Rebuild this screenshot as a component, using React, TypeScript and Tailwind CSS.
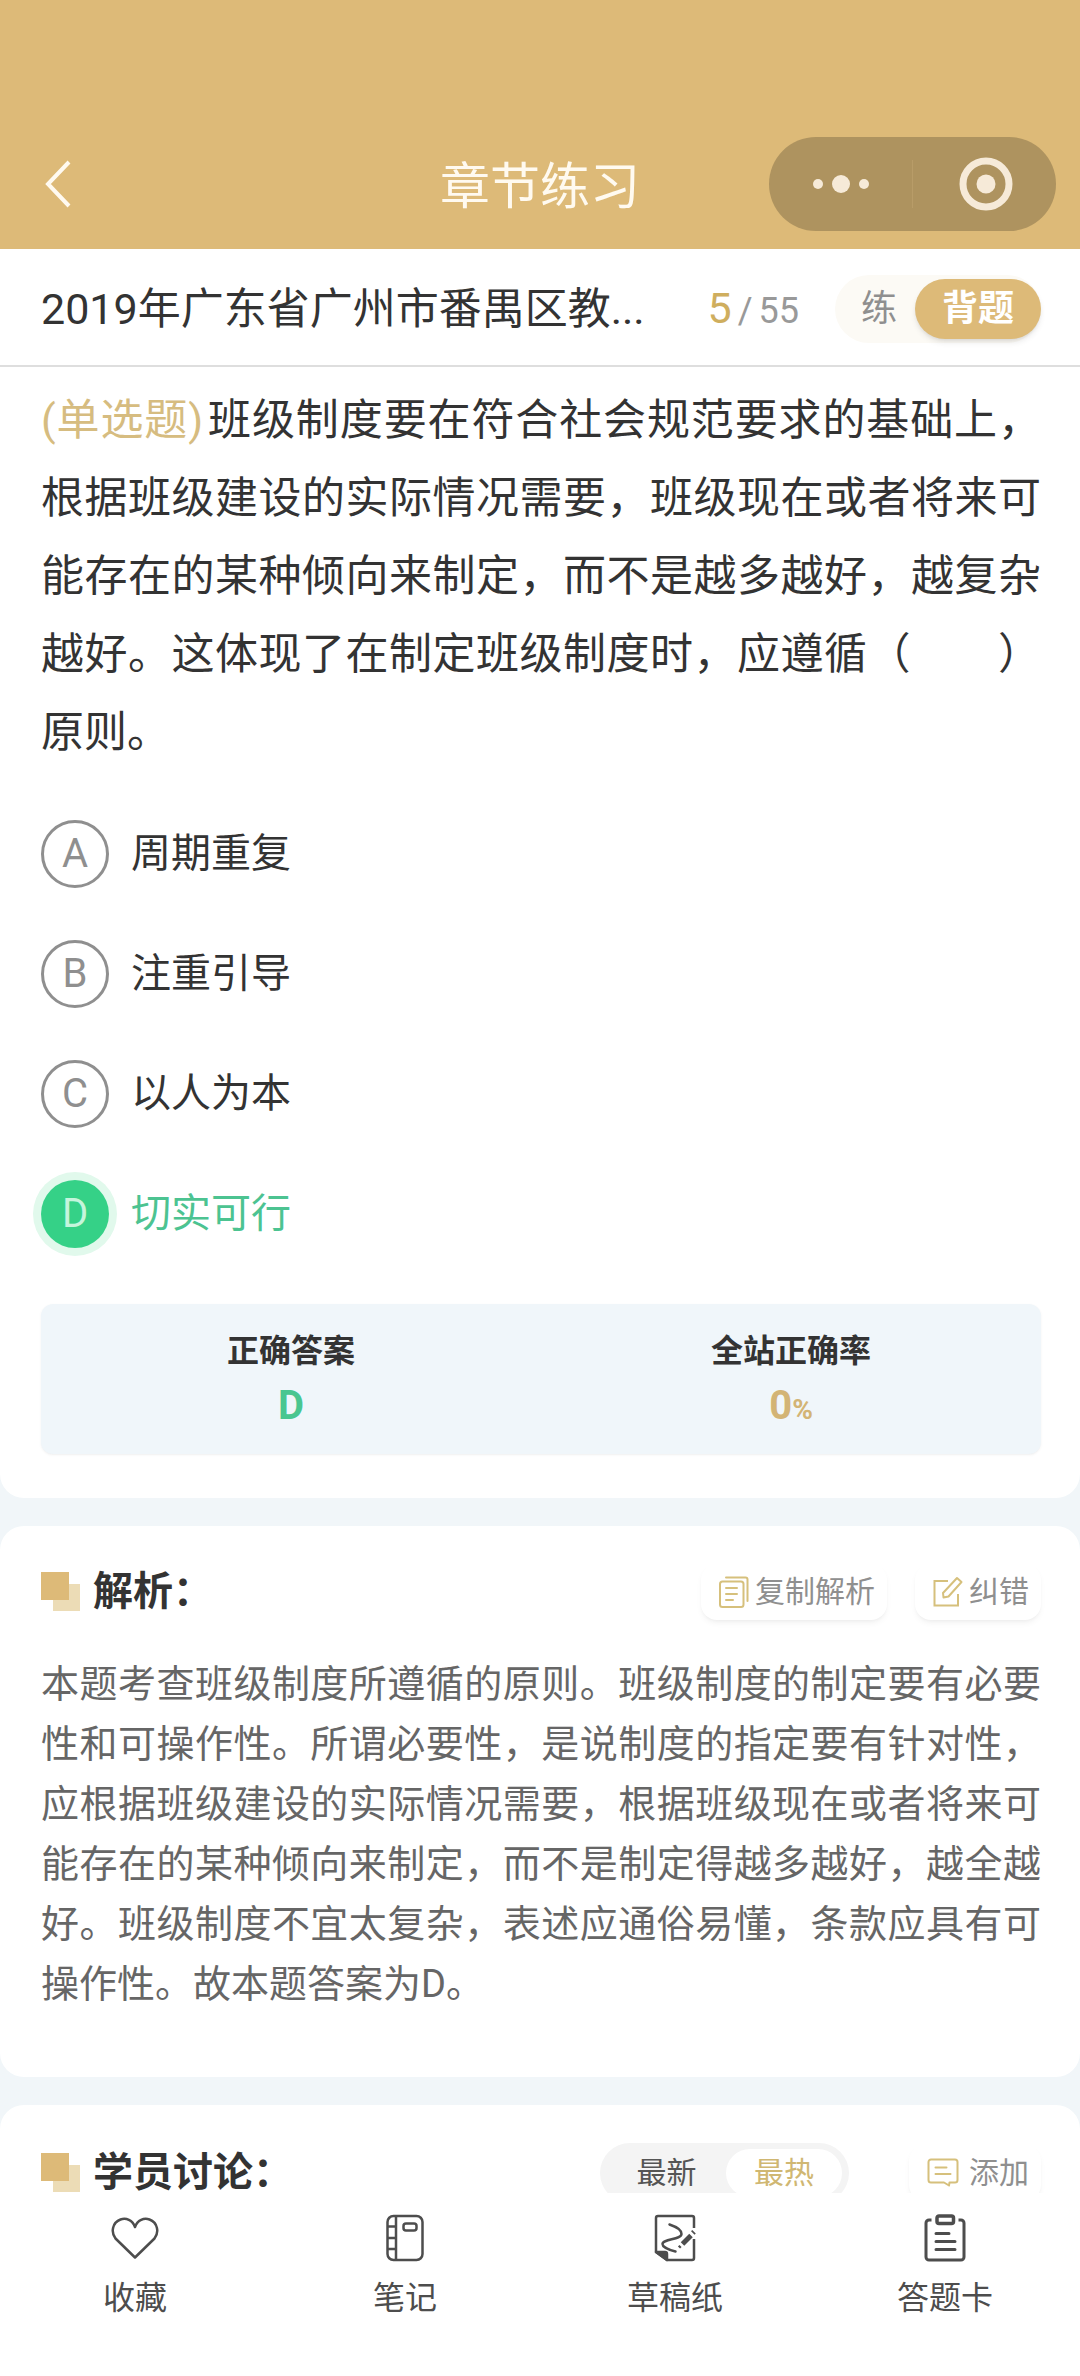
import { useState } from 'react'

interface Option {
  key: string
  text: string
}

const OPTIONS: Option[] = [
  { key: 'A', text: '周期重复' },
  { key: 'B', text: '注重引导' },
  { key: 'C', text: '以人为本' },
  { key: 'D', text: '切实可行' },
]

const ANSWER = 'D'

export default function App() {
  const [mode, setMode] = useState<'practice' | 'recite'>('recite')
  const [sort, setSort] = useState<'new' | 'hot'>('hot')
  const [selected, setSelected] = useState(ANSWER)

  return (
    <div className="flex h-screen flex-col bg-[#f1f6f9] font-[Roboto,'Noto_Sans_CJK_SC',sans-serif] text-[#333333]">
      {/* Header */}
      <header className="grid grid-cols-[1fr_auto_1fr] items-center bg-[#ddba78] px-6 pt-[137px] pb-[18px]">
        <button type="button" aria-label="返回" className="ml-4 w-12">
          <svg className="h-12 w-9" viewBox="0 0 36 48" fill="none" stroke="#fffaf0" strokeWidth={4}>
            <path d="M29 2 8 24l21 22" />
          </svg>
        </button>
        <h1 className="pt-1.5 text-[50px] leading-[60px] text-[#fffaf0]">章节练习</h1>
        <div className="flex h-[94px] w-[287px] items-center justify-self-end rounded-full bg-[#ae935f]">
          <button type="button" aria-label="更多" className="flex flex-1 justify-center">
            <svg className="h-5 w-[60px]" viewBox="0 0 60 20" fill="#f6ead8">
              <circle cx="7" cy="10" r="5" />
              <circle cx="30" cy="10" r="9" />
              <circle cx="53" cy="10" r="5" />
            </svg>
          </button>
          <span className="h-12 w-px bg-[#b89c68]" />
          <button type="button" aria-label="关闭" className="flex flex-1 justify-center">
            <svg className="size-14" viewBox="0 0 56 56" fill="none">
              <circle cx="29" cy="28" r="23" stroke="#f6ead8" strokeWidth={7} />
              <circle cx="29" cy="28" r="9.500" fill="#f6ead8" />
            </svg>
          </button>
        </div>
      </header>

      {/* Paper title, progress and mode */}
      <div className="flex h-[118px] shrink-0 items-center border-b-2 border-[#dedede] bg-white pt-1 pr-[39px] pl-[41px]">
        <h2 className="flex-1 whitespace-nowrap text-[43px] leading-[60px]">2019年广东省广州市番禺区教...</h2>
        <p className="mr-9 flex items-baseline gap-1.5 text-4xl text-[#999999]">
          <span className="text-[43px] text-[#cfae5e]">5</span>
          <span>/</span>
          <span>55</span>
        </p>
        <div className="flex h-[68px] items-center rounded-full bg-[#fcfaf5] text-4xl">
          <button type="button" onClick={() => setMode('practice')} className="w-20 pl-2 text-[#8f8f8f]">
            练
          </button>
          <button
            type="button"
            aria-pressed={mode === 'recite'}
            onClick={() => setMode('recite')}
            className="h-[60px] w-[126px] rounded-full bg-[#ddba78] font-bold text-white shadow-md shadow-black/10"
          >
            背题
          </button>
        </div>
      </div>

      <main className="flex min-h-0 flex-1 flex-col gap-7 overflow-y-auto [scrollbar-width:none]">
        {/* Question */}
        <section className="rounded-b-3xl bg-white pt-3.5 pr-[39px] pb-11 pl-[41px]">
          <p className="text-justify text-[43px] leading-[78px]">
            <span className="mr-1 text-[#d6bc80]">(单选题)</span>
            班级制度要在符合社会规范要求的基础上，根据班级建设的实际情况需要，班级现在或者将来可能存在的某种倾向来制定，而不是越多越好，越复杂越好。这体现了在制定班级制度时，应遵循（{'\u3000\u3000'}）原则。
          </p>

          <fieldset className="mt-[49px] space-y-[52px]">
            {OPTIONS.map((option) => (
              <OptionRow
                key={option.key}
                option={option}
                checked={selected === option.key}
                onSelect={() => setSelected(option.key)}
              />
            ))}
          </fieldset>

          <dl className="mt-14 grid grid-cols-2 rounded-xl bg-[#f0f6fa] pt-6 pb-5 text-center font-bold shadow-sm shadow-black/5">
            <div>
              <dt className="text-[32px] leading-[46px]">正确答案</dt>
              <dd className="mt-1 text-[40px] leading-[56px] text-[#49c690]">{ANSWER}</dd>
            </div>
            <div>
              <dt className="text-[32px] leading-[46px]">全站正确率</dt>
              <dd className="mt-1 text-[40px] leading-[56px] text-[#d3b475]">
                0<span className="text-[28px] leading-none">%</span>
              </dd>
            </div>
          </dl>
        </section>

        {/* Explanation */}
        <section className="rounded-3xl bg-white pt-9 pr-[39px] pb-[63px] pl-[41px]">
          <div className="flex items-center">
            <SectionTitle text="解析：" />
            <button type="button" className="ml-auto flex h-14 items-center gap-1.5 rounded-2xl bg-white pr-3 pl-[18px] text-3xl text-[#8f8f8f] shadow-md shadow-black/5">
              <CopyIcon />
              复制解析
            </button>
            <button type="button" className="ml-7 flex h-14 items-center gap-1.5 rounded-2xl bg-white pr-3 pl-[18px] text-3xl text-[#8f8f8f] shadow-md shadow-black/5">
              <EditIcon />
              纠错
            </button>
          </div>
          <p className="mt-8 text-justify text-[38px] leading-[60px] text-[#666666]">
            本题考查班级制度所遵循的原则。班级制度的制定要有必要性和可操作性。所谓必要性，是说制度的指定要有针对性，应根据班级建设的实际情况需要，根据班级现在或者将来可能存在的某种倾向来制定，而不是制定得越多越好，越全越好。班级制度不宜太复杂，表述应通俗易懂，条款应具有可操作性。故本题答案为D。
          </p>
        </section>

        {/* Discussion */}
        <section className="flex-1 rounded-t-3xl bg-white pt-[38px] pr-[39px] pl-[41px]">
          <div className="flex items-center">
            <SectionTitle text="学员讨论：" />
            <div className="ml-auto flex h-[60px] items-center rounded-full bg-[#f4f4f4] px-[7px] text-3xl">
              <button type="button" onClick={() => setSort('new')} className="w-[119px] text-[#555555]">
                最新
              </button>
              <button
                type="button"
                aria-pressed={sort === 'hot'}
                onClick={() => setSort('hot')}
                className="h-12 w-[116px] rounded-full bg-white text-[#d0b772]"
              >
                最热
              </button>
            </div>
            <button type="button" className="ml-[60px] flex h-14 items-center gap-2.5 rounded-2xl bg-white pr-3 pl-[18px] text-3xl text-[#8f8f8f] shadow-md shadow-black/5">
              <CommentIcon />
              添加
            </button>
          </div>
        </section>
      </main>

      {/* Bottom bar */}
      <nav className="grid h-[183px] shrink-0 grid-cols-4 bg-white pt-[21px] text-[32px] text-[#4d4d4d]">
        <NavItem label="收藏">
          <path d="M24 43.500 4.500 24.500C-.5 18 1.500 8.500 9.500 5.500 15 3.500 21.500 6 24 13c2.500-7 9-9.500 14.500-7.500 8 3 10 12.500 5 19z" />
        </NavItem>
        <NavItem label="笔记">
          <rect x="6.500" y="2" width="35" height="44" rx="6" />
          <path d="M15 2v44M6.500 12.500H15M6.500 24H15M6.500 35H15" />
          <rect x="22.500" y="9.500" width="13" height="7" rx="2.500" />
        </NavItem>
        <NavItem label="草稿纸">
          <path d="M43 14V4a2 2 0 0 0-2-2H7a2 2 0 0 0-2 2v34l11 8h25a2 2 0 0 0 2-2V25" />
          <path d="M5 38h9q2 0 2 2v6z" fill="currentColor" />
          <path d="M18.500 10.500c6 2 12 5.500 12 9.500 0 5.500-19 5-19 10 0 3 7 6 13 7.500" strokeLinecap="round" />
          <path d="M31.500 30 40 21.500" strokeWidth={5} />
          <path d="m41.800 19 1.200-1.200" strokeWidth={5} />
          <path d="m28 33.500 1.500-1.500" strokeWidth={3} />
        </NavItem>
        <NavItem label="答题卡">
          <path d="M10.500 6H8a3 3 0 0 0-3 3v34a3 3 0 0 0 3 3h32a3 3 0 0 0 3-3V9a3 3 0 0 0-3-3h-2.500" strokeWidth={3} />
          <rect x="16" y="2" width="16.500" height="7.500" rx="2" strokeWidth={3.500} />
          <path d="M15 19.500h13M15 27.500h19M15 35.500h19" strokeWidth={3} strokeLinecap="round" />
        </NavItem>
      </nav>
    </div>
  )
}

function OptionRow({ option, checked, onSelect }: { option: Option; checked: boolean; onSelect: () => void }) {
  return (
    <label className={`relative flex items-center gap-[22px] text-[40px] leading-[60px] ${checked ? 'text-[#4cc391]' : ''}`}>
      <input type="radio" name="answer" value={option.key} checked={checked} onChange={onSelect} className="sr-only" />
      <span
        className={`flex size-[68px] items-center justify-center rounded-full ${
          checked ? 'bg-[#35d187] text-[#c5f5dc] ring-8 ring-[#e1f9ec]' : 'border-[3px] border-[#8f8f8f] text-[#8f8f8f]'
        }`}
      >
        {option.key}
      </span>
      <span>{option.text}</span>
    </label>
  )
}

function SectionTitle({ text }: { text: string }) {
  return (
    <h3 className="flex items-center gap-3 text-[40px] leading-[60px] font-bold">
      <svg className="size-10" viewBox="0 0 40 40">
        <rect x="12" y="12" width="27" height="27" fill="#ecdcb6" />
        <rect width="28" height="28" fill="#ddba78" />
      </svg>
      {text}
    </h3>
  )
}

function NavItem({ label, children }: { label: string; children: React.ReactNode }) {
  return (
    <button type="button" className="flex flex-col items-center gap-4">
      <svg className="size-12" viewBox="0 0 48 48" fill="none" stroke="currentColor" strokeWidth={2.5} strokeLinejoin="round">
        {children}
      </svg>
      <span className="leading-10">{label}</span>
    </button>
  )
}

function CopyIcon() {
  return (
    <svg className="h-8 w-[30px]" viewBox="0 0 30 32" fill="none" stroke="#d6c07c" strokeWidth={2} strokeLinecap="round">
      <rect x="1" y="5.500" width="23.500" height="25.500" rx="2.500" />
      <path d="M7 1.500h19.500a2 2 0 0 1 2 2V25M7 12h11M7 18h11M7 24h7" />
    </svg>
  )
}

function EditIcon() {
  return (
    <svg className="h-8 w-[30px]" viewBox="0 0 30 32" fill="none" stroke="#d6c07c" strokeWidth={2}>
      <path d="M15 5H1.500v24.500H25V18" />
      <path d="m24 2 4.500 4L15.500 20.500 10.500 21.500 10 17z" strokeLinejoin="round" />
    </svg>
  )
}

function CommentIcon() {
  return (
    <svg className="h-8 w-8" viewBox="0 0 32 32" fill="none" stroke="#d6c07c" strokeWidth={2} strokeLinecap="round" strokeLinejoin="round">
      <path d="M22 28.500 17 25.500H4a2.500 2.500 0 0 1-2.500-2.500V5A2.500 2.500 0 0 1 4 2.500h24A2.500 2.500 0 0 1 30.500 5v18a2.500 2.500 0 0 1-2.500 2.500h-5.500z" />
      <path d="M8.500 10.500h11M8.500 17h15" />
    </svg>
  )
}
